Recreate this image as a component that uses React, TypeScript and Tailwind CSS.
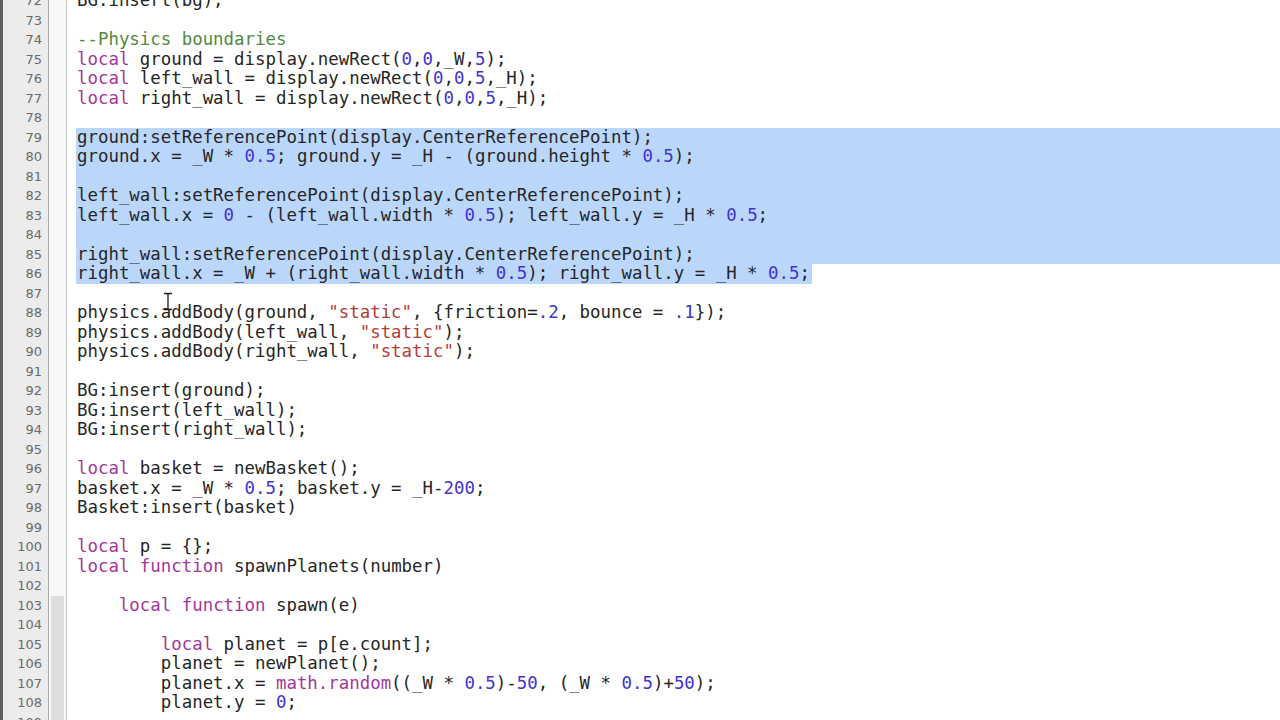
const lines: string[] = [
  'BG:insert(bg);',
  '',
  '--Physics boundaries',
  'local ground = display.newRect(0,0,_W,5);',
  'local left_wall = display.newRect(0,0,5,_H);',
  'local right_wall = display.newRect(0,0,5,_H);',
  '',
  'ground:setReferencePoint(display.CenterReferencePoint);',
  'ground.x = _W * 0.5; ground.y = _H - (ground.height * 0.5);',
  '',
  'left_wall:setReferencePoint(display.CenterReferencePoint);',
  'left_wall.x = 0 - (left_wall.width * 0.5); left_wall.y = _H * 0.5;',
  '',
  'right_wall:setReferencePoint(display.CenterReferencePoint);',
  'right_wall.x = _W + (right_wall.width * 0.5); right_wall.y = _H * 0.5;',
  '',
  'physics.addBody(ground, "static", {friction=.2, bounce = .1});',
  'physics.addBody(left_wall, "static");',
  'physics.addBody(right_wall, "static");',
  '',
  'BG:insert(ground);',
  'BG:insert(left_wall);',
  'BG:insert(right_wall);',
  '',
  'local basket = newBasket();',
  'basket.x = _W * 0.5; basket.y = _H-200;',
  'Basket:insert(basket)',
  '',
  'local p = {};',
  'local function spawnPlanets(number)',
  '',
  '    local function spawn(e)',
  '',
  '        local planet = p[e.count];',
  '        planet = newPlanet();',
  '        planet.x = math.random((_W * 0.5)-50, (_W * 0.5)+50);',
  '        planet.y = 0;',
  '',
  '',
]

const FIRST = 72

const tokenRe = /(--.*$)|("[^"]*")|\b(local|function|math\.random)\b|((?<![\w])\.?\d+(?:\.\d+)?)/g

function highlight(src: string) {
  const out: React.ReactNode[] = []
  let last = 0
  let m: RegExpExecArray | null
  tokenRe.lastIndex = 0
  while ((m = tokenRe.exec(src))) {
    if (m.index > last) out.push(src.slice(last, m.index))
    let cls = ''
    if (m[1]) cls = 'text-[#4f8a3d]'
    else if (m[2]) cls = 'text-[#b43c38]'
    else if (m[3]) cls = 'text-[#a3379c]'
    else cls = 'text-[#4233d0]'
    out.push(
      <span key={m.index} className={cls}>
        {m[0]}
      </span>
    )
    last = m.index + m[0].length
  }
  if (last < src.length) out.push(src.slice(last))
  return out
}

export default function App() {
  return (
    <div className="relative h-[720px] w-full overflow-hidden bg-white">
      <div className="mt-[-8.75px] flex flex-col">
        {lines.map((text, i) => {
          const n = FIRST + i
          const fullSel = n >= 79 && n <= 85
          const partSel = n === 86
          return (
            <div key={n} className="flex h-[19.5px]">
              <div className="w-[3px] shrink-0 bg-[#5e5e5e]" />
              <div className="w-[46px] shrink-0 border-r border-[#a9a9a9] bg-[#ececec] pr-[6px] text-right font-['DejaVu_Sans',sans-serif] text-[13px] leading-[19.5px] text-[#6a6a6a]">
                {n}
              </div>
              <div className="w-[18px] shrink-0 border-r border-[#c4c4c4] bg-[#f7f7f7] px-[2px]">
                {n >= 103 && <div className="h-full bg-[#dedede]" />}
              </div>
              <div className="flex-1 pl-[9px]">
                <div
                  className={
                    "h-full whitespace-pre pl-[1px] font-['DejaVu_Sans_Mono',monospace] text-[17.4px] leading-[19.5px] text-[#262626] " +
                    (fullSel ? 'bg-[#bad7fb]' : '')
                  }
                >
                  {partSel ? (
                    <span className="ml-[-1px] inline-block h-[19.5px] bg-[#bad7fb] pl-[1px] pr-[2px] align-top">{highlight(text)}</span>
                  ) : (
                    highlight(text)
                  )}
                </div>
              </div>
            </div>
          )
        })}
      </div>
      <svg className="absolute left-[163px] top-[292px]" width="10" height="19" viewBox="0 0 10 19">
        <path d="M1 1.5h3l1 1 1-1h3M5 2.5v14M1 17.5h3l1-1 1 1h3" stroke="#222" strokeWidth="1.3" fill="none" />
      </svg>
    </div>
  )
}
